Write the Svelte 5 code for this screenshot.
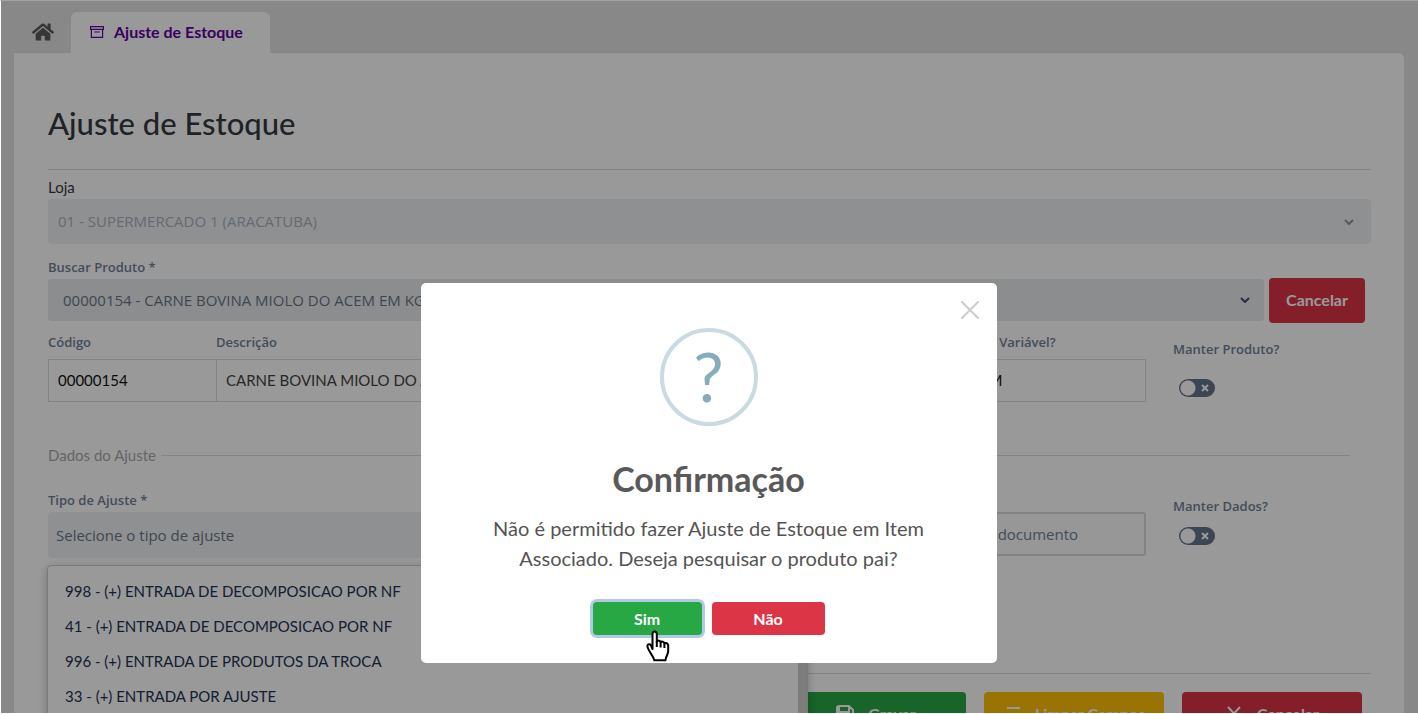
<script>
    let open = true;
    let manterProduto = false;
    let manterDados = false;

    const tipos = [
        '998 - (+) ENTRADA DE DECOMPOSICAO POR NF',
        '41 - (+) ENTRADA DE DECOMPOSICAO POR NF',
        '996 - (+) ENTRADA DE PRODUTOS DA TROCA',
        '33 - (+) ENTRADA POR AJUSTE'
    ];

    function fechar() {
        open = false;
    }
</script>

<div class="app">
    <nav class="tabs">
        <a class="home" href="#home" aria-label="Início">
            <svg viewBox="0 0 576 512" width="22" height="20" fill="currentColor">
                <path d="M280.37 148.26L96 300.11V464a16 16 0 0 0 16 16l112.06-.29a16 16 0 0 0 15.92-16V368a16 16 0 0 1 16-16h64a16 16 0 0 1 16 16v95.64a16 16 0 0 0 16 16.05L464 480a16 16 0 0 0 16-16V300L295.67 148.26a12.19 12.19 0 0 0-15.3 0zM571.6 251.47L488 182.56V44.05a12 12 0 0 0-12-12h-56a12 12 0 0 0-12 12v72.61L318.47 43a48 48 0 0 0-61 0L4.34 251.47a12 12 0 0 0-1.6 16.9l25.5 31A12 12 0 0 0 45.15 301l235.22-193.74a12.19 12.19 0 0 1 15.3 0L530.9 301a12 12 0 0 0 16.9-1.6l25.5-31a12 12 0 0 0-1.7-16.93z" />
            </svg>
        </a>
        <a class="tab" href="#ajuste">
            <svg viewBox="0 0 14 12" width="14" height="12" fill="none" stroke="currentColor">
                <path d="M.6.6h12.800v2.800H.6z M1.400 3.400v8h11.200v-8 M4.300 6h5.400" stroke-width="1.2" />
            </svg>
            Ajuste de Estoque
        </a>
    </nav>

    <main class="panel">
        <h1>Ajuste de Estoque</h1>
        <hr />

        <label class="loja-label" for="loja">Loja</label>
        <div class="select loja">
            <select id="loja" disabled>
                <option>01 - SUPERMERCADO 1 (ARACATUBA)</option>
            </select>
            <svg viewBox="0 0 10 6" width="10" height="6"><path d="M1 1l4 4 4-4" /></svg>
        </div>

        <label class="label buscar-label" for="produto">Buscar Produto *</label>
        <div class="buscar">
            <div class="select produto">
                <select id="produto">
                    <option>00000154 - CARNE BOVINA MIOLO DO ACEM EM KG</option>
                </select>
                <svg viewBox="0 0 10 6" width="10" height="6"><path d="M1 1l4 4 4-4" /></svg>
            </div>
            <button class="btn red cancelar" type="button">Cancelar</button>
        </div>

        <div class="row">
            <div class="fields">
                <div class="codigo">
                    <label class="label" for="codigo">Código</label>
                    <input id="codigo" type="text" value="00000154" readonly />
                </div>
                <div class="descricao">
                    <label class="label" for="descricao">Descrição</label>
                    <input id="descricao" type="text" value="CARNE BOVINA MIOLO DO ACEM EM KG" readonly />
                </div>
                <div class="peso">
                    <label class="label" for="peso">Peso Variável?</label>
                    <input id="peso" type="text" value="SIM" readonly />
                </div>
            </div>
            <div class="manter produto-toggle">
                <label class="label" for="manter-produto">Manter Produto?</label>
                <span class="toggle">
                    <input id="manter-produto" type="checkbox" bind:checked={manterProduto} />
                    <svg viewBox="0 0 8 8" width="8" height="8"><path d="M1 1l6 6M7 1L1 7" /></svg>
                </span>
            </div>
        </div>

        <div class="divider"><span>Dados do Ajuste</span></div>

        <div class="row">
            <div class="fields dados">
                <div class="tipo">
                    <label class="label" for="tipo">Tipo de Ajuste *</label>
                    <div class="select tipo-select">
                        <select id="tipo">
                            <option>Selecione o tipo de ajuste</option>
                        </select>
                    </div>
                    <div class="menu">
                        <ul role="listbox" aria-label="Tipo de Ajuste">
                            {#each tipos as tipo (tipo)}
                                <li role="option" aria-selected="false">{tipo}</li>
                            {/each}
                        </ul>
                        <div class="scroll"></div>
                    </div>
                </div>
                <div class="documento">
                    <label class="label" for="documento">Documento</label>
                    <input id="documento" type="text" placeholder="Informe o número do documento" />
                </div>
            </div>
            <div class="manter dados-toggle">
                <label class="label" for="manter-dados">Manter Dados?</label>
                <span class="toggle">
                    <input id="manter-dados" type="checkbox" bind:checked={manterDados} />
                    <svg viewBox="0 0 8 8" width="8" height="8"><path d="M1 1l6 6M7 1L1 7" /></svg>
                </span>
            </div>
        </div>

        <hr class="bottom" />
        <div class="actions">
            <button class="btn green" type="button">
                <svg viewBox="0 0 18 18" width="18" height="18" fill="none" stroke="currentColor" stroke-width="2">
                    <path d="M1 3a2 2 0 0 1 2-2h10l4 4v10a2 2 0 0 1-2 2H3a2 2 0 0 1-2-2z M3 2v5h10V2" />
                    <circle cx="9" cy="12" r="2" />
                </svg>
                Gravar
            </button>
            <button class="btn yellow" type="button">
                <svg viewBox="0 0 18 18" width="18" height="18" fill="none" stroke="currentColor" stroke-width="2">
                    <path d="M4 3h13M2 9h13M0 15h13" />
                </svg>
                Limpar Campos
            </button>
            <button class="btn red" type="button">
                <svg viewBox="0 0 18 18" width="18" height="18" fill="none" stroke="currentColor" stroke-width="2">
                    <path d="M3 2l12 13M15 2L3 15" />
                </svg>
                Cancelar
            </button>
        </div>
    </main>

    {#if open}
        <div class="overlay">
            <div class="modal" role="dialog" aria-modal="true" aria-labelledby="modal-title">
                <button class="close" type="button" aria-label="Fechar" on:click={fechar}>
                    <svg viewBox="0 0 18 18" width="18" height="18"><path d="M1 1l16 16M17 1L1 17" /></svg>
                </button>
                <div class="question">?</div>
                <h2 id="modal-title">Confirmação</h2>
                <p>Não é permitido fazer Ajuste de Estoque em Item Associado. Deseja pesquisar o produto pai?</p>
                <div class="modal-actions">
                    <button class="btn green sim" type="button" on:click={fechar}>
                        Sim
                        <svg class="hand" viewBox="0 0 24 32" width="24" height="32">
                            <path d="M6.500 19V4.200C6.500 .6 10.800 .6 10.800 4.200V12C11.400 9.900 14.500 10.300 14.600 12.500C15.500 10.900 18.300 11.500 18.400 13.700C19.600 12.300 22.300 13.300 22.200 15.700V21C22.200 24 20.200 25.500 19.400 30.300H8.300C7.800 26.500 3.800 23.500 1.700 17.500C.6 14.500 3.500 13 4.800 15.200z" />
                            <path d="M10.800 11v6M14.600 12.500v5M18.400 13.700V18" />
                        </svg>
                    </button>
                    <button class="btn red nao" type="button" on:click={fechar}>Não</button>
                </div>
            </div>
        </div>
    {/if}
</div>

<style>
    :global(body) {
        margin: 0;
        background: #fff;
    }
    * {
        box-sizing: border-box;
    }
    .app {
        position: relative;
        height: 100vh;
        overflow: hidden;
        padding: 0 14px 0 13px;
        border-left: 1px solid #fff;
        border-top: 1px solid #a3a3a3;
        border-bottom: 1px solid #fff;
        background: #e3e3e3;
        color: #343a40;
        font-family: Lato, sans-serif;
        font-size: 16px;
    }
    input, select, button {
        font: inherit;
        margin: 0;
    }

    /* tabs */
    .tabs {
        display: flex;
        padding-top: 11px;
        height: 52px;
    }
    .home {
        width: 57px;
        padding: 10px 0 0 18px;
        color: #5a5a5a;
    }
    .tab {
        display: flex;
        align-items: center;
        gap: 10px;
        padding: 0 27px 2px 19px;
        border-radius: 6px 6px 0 0;
        background: #fff;
        color: #6200a3;
        font-weight: 700;
        text-decoration: none;
    }

    .panel {
        height: 100%;
        padding: 50px 33px 0 34px;
        border-radius: 0 6px 0 0;
        background: #fff;
    }
    h1 {
        margin: 0;
        font-size: 31px;
        line-height: 40px;
        font-weight: 500;
    }
    hr {
        margin: 26px 0 0;
        border: 0;
        border-top: 1px solid #d9dbdd;
    }
    .label {
        display: block;
        font-family: "Open Sans", sans-serif;
        font-size: 13px;
        line-height: 20px;
        font-weight: 600;
        color: #718096;
        white-space: nowrap;
    }
    .loja-label {
        display: block;
        padding: 7px 0 1px;
        font-size: 15px;
        line-height: 21px;
    }

    /* selects */
    .select {
        display: flex;
        align-items: center;
        border-radius: 4px;
        background: #eef1f4;
    }
    .select select {
        flex: 1;
        width: 100%;
        height: 100%;
        padding: 0 10px;
        border: 0;
        background: none;
        appearance: none;
        opacity: 1;
        color: #6b7686;
        font-family: "Open Sans", sans-serif;
        font-size: 15px;
    }
    .select svg {
        flex: none;
        margin-right: 17px;
        fill: none;
        stroke: #8d97a5;
        stroke-width: 2;
    }
    .loja {
        height: 45px;
    }
    .loja select {
        padding-bottom: 2px;
        color: #a9b1bd;
    }
    .buscar-label {
        padding-top: 13px;
        line-height: 21px;
    }
    .buscar {
        display: flex;
        align-items: center;
        gap: 5px;
        padding-right: 6px;
    }
    .produto {
        flex: 1;
        height: 42px;
        margin-bottom: 1px;
        background: #e9ecef;
    }
    .produto select {
        padding-left: 15px;
    }
    .produto svg {
        margin-right: 14px;
        stroke: #3c4a66;
    }
    .tipo-select {
        height: 46px;
    }
    .tipo-select select {
        padding-left: 8px;
    }

    .btn {
        display: flex;
        align-items: center;
        justify-content: center;
        gap: 14px;
        padding: 0 0 2px;
        border: 0;
        border-radius: 4px;
        color: #fff;
        font-weight: 700;
    }
    .red { background: #dc3545; }
    .green { background: #28a745; }
    .yellow { background: #ffc107; }
    .cancelar {
        width: 96px;
        height: 45px;
    }

    /* rows of fields */
    .row {
        display: grid;
        grid-template-columns: 83fr 17fr;
    }
    .fields {
        display: flex;
        padding-top: 9px;
    }
    .fields input {
        width: 100%;
        height: 43px;
        margin-top: 7px;
        padding: 0 9px 2px;
        border: 1px solid #d9dbdd;
        background: #fff;
        color: #111;
        font-size: 15px;
    }
    .codigo { width: 168px; }
    .descricao { flex: 1; }
    .codigo input, .descricao input { border-right: 0; }
    .descricao input { color: #444; }
    .peso { width: 180px; }
    .manter {
        padding-left: 27px;
    }
    .produto-toggle {
        padding-top: 16px;
    }
    .toggle {
        display: flex;
        position: relative;
        width: 36px;
        margin: 20px 0 0 6px;
    }
    .toggle input {
        width: 36px;
        height: 18px;
        border-radius: 9px;
        appearance: none;
        background: radial-gradient(circle at 9px 9px, #fff 7px, transparent 8px) #64748b;
    }
    .toggle svg {
        position: absolute;
        right: 6px;
        top: 5px;
        fill: none;
        stroke: #fff;
        stroke-width: 2;
        pointer-events: none;
    }
    .dados-toggle .toggle {
        margin-top: 11px;
    }

    .divider {
        display: flex;
        align-items: center;
        gap: 5px;
        margin: 44px 21px 0 0;
        font-size: 15px;
        line-height: 18px;
        color: #a9a9a9;
    }
    .divider::after {
        content: '';
        flex: 1;
        border-top: 1px solid #d9dbdd;
    }

    .fields.dados {
        gap: 27px;
        padding-top: 26px;
    }
    .dados-toggle {
        padding-top: 32px;
    }
    .dados .label {
        margin-bottom: 2px;
    }
    .tipo {
        position: relative;
        flex: 760;
    }
    .documento {
        flex: 311;
    }
    .documento input {
        height: 44px;
        margin: 0;
        padding: 0 6px;
        border: 2px solid #d8dbe2;
        border-radius: 3px;
        background: #fafcfa;
        font-family: "Open Sans", sans-serif;
    }
    .documento input::placeholder {
        color: #718096;
        opacity: 1;
    }

    .menu {
        position: absolute;
        z-index: 1;
        top: 75px;
        left: -1px;
        right: 0;
        display: flex;
        height: 245px;
        border: 1px solid #ccc;
        border-radius: 4px;
        background: #fff;
        box-shadow: 0 2px 8px rgba(0, 0, 0, .25);
    }
    .menu ul {
        flex: 1;
        margin: 0;
        padding: 8px 0;
        list-style: none;
    }
    .menu li {
        padding-left: 17px;
        font-size: 15px;
        line-height: 35px;
        color: #233252;
    }
    .scroll {
        width: 9px;
        background: #cfcfcf;
    }

    hr.bottom {
        margin-top: 115px;
    }
    .actions {
        display: flex;
        justify-content: flex-end;
        gap: 18px;
        padding: 18px 9px 0 0;
    }
    .actions .btn {
        width: 180px;
        height: 45px;
    }

    /* confirmation */
    .overlay {
        position: absolute;
        z-index: 2;
        inset: 0;
        display: flex;
        justify-content: center;
        align-items: flex-start;
        padding: 282px 2px 0 0;
        background: rgba(0, 0, 0, .4);
    }
    .modal {
        position: relative;
        width: 576px;
        padding: 45px 72px 28px;
        border-radius: 5px;
        background: #fff;
        text-align: center;
        color: #545454;
    }
    .close {
        position: absolute;
        top: 18px;
        right: 18px;
        display: flex;
        padding: 0;
        border: 0;
        background: none;
    }
    .close svg {
        stroke: #ccc;
        stroke-width: 2;
        stroke-linecap: round;
    }
    .question {
        width: 98px;
        height: 98px;
        margin: 0 auto;
        border: 4px solid #c9dae1;
        border-radius: 50%;
        color: #87adbd;
        font-size: 68px;
        line-height: 88px;
    }
    h2 {
        margin: 33px 0 0;
        font-size: 34px;
        line-height: 40px;
        font-weight: 700;
        color: #595959;
    }
    p {
        margin: 14px 0 0;
        font-size: 20px;
        line-height: 30px;
    }
    .modal-actions {
        display: flex;
        justify-content: center;
        gap: 10px;
        margin-top: 29px;
    }
    .modal-actions .btn {
        height: 33px;
        padding: 0;
    }
    .sim {
        position: relative;
        width: 109px;
        box-shadow: 0 0 0 3px #b0cae5;
    }
    .nao {
        width: 113px;
    }
    .hand {
        position: absolute;
        top: 28px;
        left: 53px;
        fill: #fff;
        stroke: #000;
        stroke-width: 2;
        stroke-linejoin: round;
    }
</style>
